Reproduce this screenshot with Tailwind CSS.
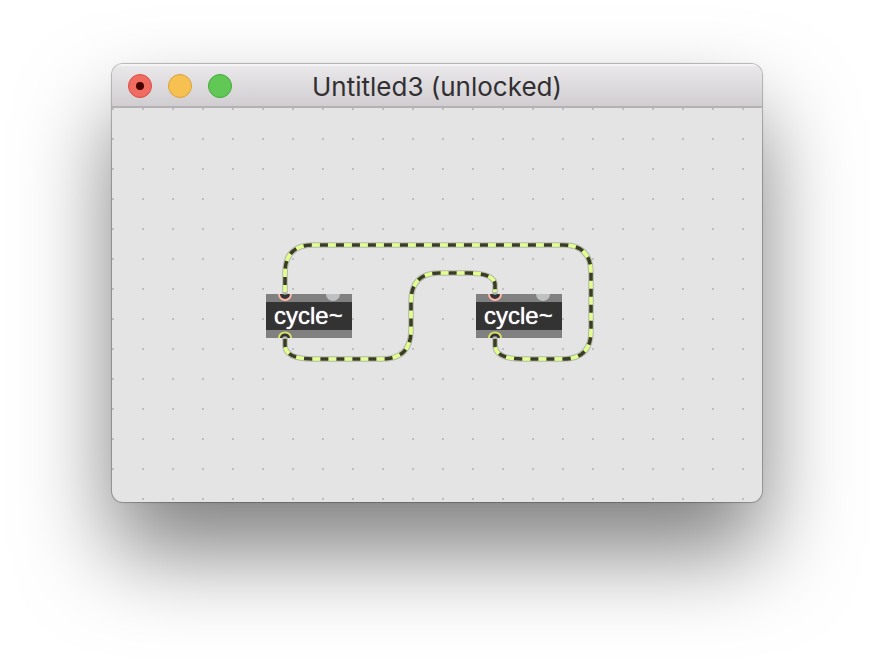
<!DOCTYPE html>
<html lang="en">
<head>
<meta charset="utf-8">
<meta name="viewport" content="width=device-width, initial-scale=1">
<title>Untitled3 (unlocked)</title>
<script src="https://cdn.jsdelivr.net/npm/@tailwindcss/browser@4"></script>
</head>
<body class="bg-white">
<div class="flex min-h-screen flex-col overflow-hidden px-28 pt-16 pb-40">
  <main class="flex flex-1 flex-col overflow-hidden rounded-[11px] bg-[#e4e4e4] shadow-[0_0_0_1px_rgba(0,0,0,0.2),0_0_3px_rgba(0,0,0,0.15),0_50px_90px_rgba(0,0,0,0.5)]">
    <header class="grid h-11 grid-cols-[1fr_auto_1fr] items-center border-b-2 border-[#b5b1b5] bg-linear-to-b from-[#ebe9eb] to-[#d1ced1] px-4 pt-0.5 shadow-[inset_0_2px_0_rgba(255,255,255,0.5)]">
      <div class="flex gap-4">
        <button type="button" aria-label="Close" class="flex size-6 items-center justify-center rounded-full border border-[#dc4a44] bg-[#f06c60]"><span class="size-2 rounded-full bg-[#470300]"></span></button>
        <button type="button" aria-label="Minimize" class="size-6 rounded-full border border-[#d9a03c] bg-[#f6c150]"></button>
        <button type="button" aria-label="Zoom" class="size-6 rounded-full border border-[#43a838] bg-[#61c855]"></button>
      </div>
      <h1 class="pt-0.5 font-['Inter',sans-serif] text-[26px] leading-8 text-[#322f32]">Untitled3 (unlocked)</h1>
    </header>
    <section aria-label="Patcher" class="relative flex-1">
      <svg class="absolute inset-0 size-full" aria-hidden="true">
        <defs>
          <pattern id="grid" width="30" height="30" patternUnits="userSpaceOnUse"><rect width="2" height="2" fill="#bfbfbf"/></pattern>
        </defs>
        <rect width="100%" height="100%" fill="url(#grid)"/>
      </svg>
      <div class="absolute top-[186px] left-[154px] w-[86px] border-y-8 border-[#808080] bg-[#333333] pl-2 font-['Liberation_Sans',Arial,sans-serif] text-2xl leading-7 text-white [text-shadow:0_0_1px_#fff]">cycle~</div>
      <div class="absolute top-[186px] left-[364px] w-[86px] border-y-8 border-[#808080] bg-[#333333] pl-2 font-['Liberation_Sans',Arial,sans-serif] text-2xl leading-7 text-white [text-shadow:0_0_1px_#fff]">cycle~</div>
      <svg class="absolute inset-0 size-full" aria-hidden="true" fill="none">
        <defs>
          <g id="ports">
            <path d="M12 0a7 7 0 0 0 14 0z" fill="#ffb6a6"/>
            <path d="M14 0a5 5 0 0 0 10 0z" fill="#333"/>
            <path d="M60 0a7 7 0 0 0 14 0z" fill="#bfc0c2"/>
            <path d="M12 44v-0.5a7 6 0 0 1 14 0v.5z" fill="#d9df68"/>
            <path d="M14 44a5 4.6 0 0 1 10 0z" fill="#333"/>
          </g>
          <path id="cord-a" d="M383 231V237Q383 251 411 251H451Q479 251 479 223V165Q479 137 451 137H201Q173 137 173 165V184"/>
          <path id="cord-b" d="M173 231V237Q173 251 201 251H270Q299 251 299 222V194Q299 165 327 165H355Q383 165 383 177V184"/>
        </defs>
        <use href="#ports" x="154" y="186"/>
        <use href="#ports" x="364" y="186"/>
        <g stroke="#b4b6b0" stroke-width="5.6" stroke-linecap="round"><use href="#cord-a"/><use href="#cord-b"/></g>
        <g stroke="#e1ff8d" stroke-width="3.6"><use href="#cord-a"/><use href="#cord-b"/></g>
        <g stroke="#3b3c28" stroke-width="3.6" stroke-dasharray="8 8"><use href="#cord-a"/><use href="#cord-b"/></g>
      </svg>
    </section>
  </main>
</div>
</body>
</html>
